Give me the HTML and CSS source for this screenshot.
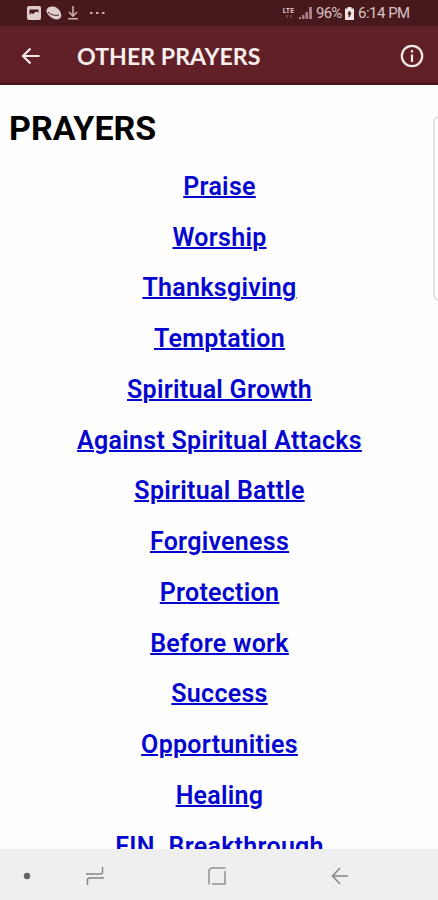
FILE: index.html
```html
<!DOCTYPE html>
<html lang="en">
<head>
    <meta charset="UTF-8">
    <title>Other Prayers</title>
    <link rel="stylesheet" href="styles.css">
</head>
<body>
    <div class="phone">
        <div class="status">
            <div class="notices">
                <svg width="14" height="14" viewBox="0 0 14 14">
                    <rect width="14" height="14" rx="2" fill="#dfcccc"/>
                    <path d="M2.500 3.500h9v3L9 5.500 6 8 4.500 7l-2 2z" fill="#48191c"/>
                </svg>
                <svg width="16" height="14" viewBox="0 0 16 14">
                    <path d="M1 3C3 0 8 0 11 2s5 6 4 9-6 3-9 1S-1 6 1 3z" fill="#dfcccc"/>
                    <path d="M2 6c3 3 7 4 11 3" fill="none" stroke="#48191c"/>
                </svg>
                <svg width="12" height="14" viewBox="0 0 12 14">
                    <path d="M6 0v10M2 6l4 4 4-4M1 12.800h10" fill="none" stroke="#c9aeae" stroke-width="1.600"/>
                </svg>
                <svg class="more" width="16" height="4" viewBox="0 0 16 4">
                    <path d="M0 1h2.500v2H0zM6 1h2.500v2H6zM12 1h2.500v2H12z" fill="#c9aeae"/>
                </svg>
            </div>
            <div class="system">
                <div class="lte">LTE<svg width="8" height="4" viewBox="0 0 8 4"><path d="M2 0v3M6 0v3" stroke="#8c5c60" stroke-width="1.200"/></svg></div>
                <svg class="signal" width="13" height="12" viewBox="0 0 13 12">
                    <path d="M0 12v-2h2v2zM3 12V8h2.500v4zM6.500 12V5H9v7zM10 12V0h3v12z" fill="#a98185"/>
                </svg>
                <span class="percent">96%</span>
                <svg class="battery" width="9" height="13" viewBox="0 0 9 13">
                    <path d="M2.500 0h4v1.500H9V13H0V1.500h2.500z" fill="#efe2e0"/>
                    <path d="M4.500 4L3 7h1v3l2-4H5z" fill="#48191c" stroke="#48191c" stroke-width=".8"/>
                </svg>
                <span class="time">6:14 PM</span>
            </div>
        </div>
        <div class="toolbar">
            <svg class="back" width="20" height="18" viewBox="0 0 20 18">
                <path d="M18.500 9H2M9.500 1.500L2 9l7.500 7.500" fill="none" stroke="#f6e9e7" stroke-width="2.200"/>
            </svg>
            <div class="title">OTHER PRAYERS</div>
            <svg width="24" height="24" viewBox="0 0 24 24">
                <circle cx="12" cy="12" r="10.200" fill="none" stroke="#f6e9e7" stroke-width="2.200"/>
                <path d="M12 6v2.400M12 10.500V18" stroke="#f6e9e7" stroke-width="2.200"/>
            </svg>
        </div>
        <div class="content">
            <h1>PRAYERS</h1>
            <ul>
                <li><a href="#">Praise</a></li>
                <li><a href="#">Worship</a></li>
                <li><a href="#">Thanksgiving</a></li>
                <li><a href="#">Temptation</a></li>
                <li><a href="#">Spiritual Growth</a></li>
                <li><a href="#">Against Spiritual Attacks</a></li>
                <li><a href="#">Spiritual Battle</a></li>
                <li><a href="#">Forgiveness</a></li>
                <li><a href="#">Protection</a></li>
                <li><a href="#">Before work</a></li>
                <li><a href="#">Success</a></li>
                <li><a href="#">Opportunities</a></li>
                <li><a href="#">Healing</a></li>
                <li><a href="#">FIN. Breakthrough</a></li>
            </ul>
            <div class="edge"></div>
        </div>
        <div class="nav">
            <svg width="8" height="8" viewBox="0 0 8 8"><circle cx="4" cy="4" r="3.200" fill="#666"/></svg>
            <svg width="18" height="20" viewBox="0 0 18 20">
                <path d="M0 8h14.500q2 0 2-2V1M18 12H3.500q-2 0-2 2v5" fill="none" stroke="#858585" stroke-width="1.500"/>
            </svg>
            <svg width="18" height="18" viewBox="0 0 18 18">
                <path d="M1 17.500V3l2-2h14.500M17 4v13H4" fill="none" stroke="#929292" stroke-width="1.500"/>
            </svg>
            <svg width="18" height="18" viewBox="0 0 18 18">
                <path d="M17 9H1.500M9 1L1.500 9 9 17" fill="none" stroke="#858585" stroke-width="1.500"/>
            </svg>
        </div>
    </div>
</body>
</html>
```

FILE: styles.css
```css
body {
    margin: 0;
    font-family: Roboto, sans-serif;
}

svg {
    display: block;
    flex: none;
}

.phone {
    display: flex;
    flex-direction: column;
    height: 900px;
    overflow: hidden;
    background: #fefefe;
}

.status {
    display: flex;
    justify-content: space-between;
    align-items: center;
    height: 26px;
    padding: 0 29px 0 27px;
    background: #48191c;
    color: #d8c3c3;
}

.notices,
.system {
    display: flex;
    align-items: center;
}

.notices {
    gap: 5px;
}

.more {
    margin-left: 6px;
}

.lte {
    display: flex;
    flex-direction: column;
    align-items: center;
    width: 15px;
    font-size: 7px;
    font-weight: 700;
    line-height: 7px;
}

.signal {
    margin: 0 4px 0 3px;
}

.percent,
.time {
    font-size: 15px;
    line-height: 28px;
    white-space: nowrap;
}

.percent {
    width: 26px;
    letter-spacing: -0.8px;
}

.battery {
    margin: 0 4px 0 3px;
}

.time {
    width: 51px;
    letter-spacing: -0.5px;
}

.toolbar {
    display: flex;
    align-items: center;
    box-sizing: border-box;
    height: 59px;
    padding: 2px 14px 0 21px;
    border-bottom: 2px solid #4a1014;
    background: #612027;
}

.title {
    flex: 1;
    margin-left: 36px;
    color: #f8eeec;
    font: 700 23.2px/30px Lato, sans-serif;
}

.content {
    position: relative;
    height: 764px;
    overflow: hidden;
}

h1 {
    margin: 23px 0 14px 9px;
    font-size: 34px;
    font-weight: 700;
    line-height: 40px;
}

ul {
    margin: 0;
    padding: 0 0 0 1px;
    list-style: none;
    text-align: center;
}

li {
    height: 50.74px;
    font-size: 25px;
    font-weight: 600;
    line-height: 50.74px;
    letter-spacing: 0.28px;
}

a {
    color: #0505d0;
    text-decoration-thickness: 2px;
}

/* handle of the side panel, half out of the screen */
.edge {
    position: absolute;
    top: 31px;
    right: -11px;
    width: 12px;
    height: 181px;
    border: 2px solid #e0e0e0;
    border-radius: 6px;
}

.nav {
    display: grid;
    grid-template-columns: 53px 84px 160px 86px;
    place-items: center;
    height: 51px;
    padding-top: 2px;
    box-sizing: border-box;
    background: #efefef;
}
```
